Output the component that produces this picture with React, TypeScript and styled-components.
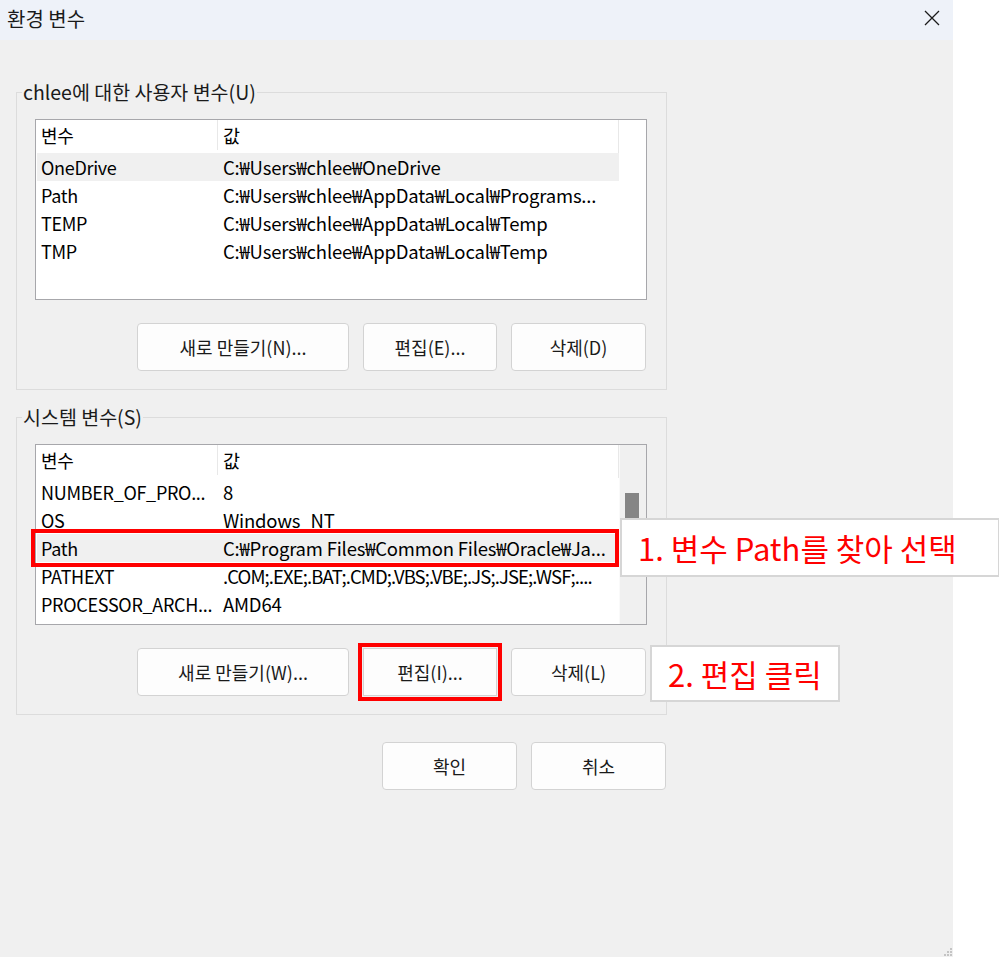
import React from "react";
import styled, { createGlobalStyle } from "styled-components";

const GlobalStyle = createGlobalStyle`
  html, body {
    margin: 0;
    padding: 0;
    background: #ffffff;
  }
  body {
    font-family: "Noto Sans CJK KR", "Liberation Sans", sans-serif;
    color: #000000;
  }
`;

type Row = {
  name: string;
  value: string;
  selected?: boolean;
  marked?: boolean;
  tight?: boolean;
};

const userVars: Row[] = [
  { name: "OneDrive", value: "C:₩Users₩chlee₩OneDrive", selected: true },
  { name: "Path", value: "C:₩Users₩chlee₩AppData₩Local₩Programs..." },
  { name: "TEMP", value: "C:₩Users₩chlee₩AppData₩Local₩Temp" },
  { name: "TMP", value: "C:₩Users₩chlee₩AppData₩Local₩Temp" },
];

const systemVars: Row[] = [
  { name: "NUMBER_OF_PRO...", value: "8" },
  { name: "OS", value: "Windows_NT" },
  {
    name: "Path",
    value: "C:₩Program Files₩Common Files₩Oracle₩Ja...",
    selected: true,
    marked: true,
  },
  {
    name: "PATHEXT",
    value: ".COM;.EXE;.BAT;.CMD;.VBS;.VBE;.JS;.JSE;.WSF;....",
    tight: true,
  },
  { name: "PROCESSOR_ARCH...", value: "AMD64" },
];

const App: React.FC = () => {
  return (
    <>
      <GlobalStyle />
      <Dialog>
        <TitleBar>
          <Title>환경 변수</Title>
          <CloseIcon width="16" height="16" viewBox="0 0 16 16">
            <path d="M1 1 L15 15 M15 1 L1 15" stroke="#1b1b1b" strokeWidth="1.3" fill="none" />
          </CloseIcon>
        </TitleBar>

        <Body>
          <Group>
            <Legend>chlee에 대한 사용자 변수(U)</Legend>
            <VarList rows={userVars} />
            <ButtonRow>
              <Button $w={212}>새로 만들기(N)...</Button>
              <Button $w={134}>편집(E)...</Button>
              <Button $w={135}>삭제(D)</Button>
            </ButtonRow>
          </Group>

          <Group>
            <Legend>시스템 변수(S)</Legend>
            <VarList rows={systemVars} scroll />
            <ButtonRow>
              <Button $w={212}>새로 만들기(W)...</Button>
              <Button $w={134} $marked>
                편집(I)...
              </Button>
              <Button $w={135}>삭제(L)</Button>
              <Callout $step={2}>2. 편집 클릭</Callout>
            </ButtonRow>
          </Group>

          <FooterRow>
            <Button $w={135}>확인</Button>
            <Button $w={135}>취소</Button>
          </FooterRow>
        </Body>

        <Grip width="10" height="10" viewBox="0 0 10 10">
          <rect x="7" y="1" width="2" height="2" fill="#c4c4c4" />
          <rect x="4" y="4" width="2" height="2" fill="#c4c4c4" />
          <rect x="7" y="4" width="2" height="2" fill="#c4c4c4" />
          <rect x="1" y="7" width="2" height="2" fill="#c4c4c4" />
          <rect x="4" y="7" width="2" height="2" fill="#c4c4c4" />
          <rect x="7" y="7" width="2" height="2" fill="#c4c4c4" />
        </Grip>
      </Dialog>
    </>
  );
};

const VarList: React.FC<{ rows: Row[]; scroll?: boolean }> = ({ rows, scroll }) => (
  <ListBox>
    <ListBody>
      <HeaderRow>
        <NameCell $header>변수</NameCell>
        <ValueCell>값</ValueCell>
      </HeaderRow>
      {rows.map((r) => (
        <ItemRow key={r.name} $selected={r.selected}>
          <NameCell>{r.name}</NameCell>
          <ValueCell $tight={r.tight}>{r.value}</ValueCell>
          {r.marked && (
            <>
              <RowMark />
              <Callout $step={1}>1. 변수 Path를 찾아 선택</Callout>
            </>
          )}
        </ItemRow>
      ))}
    </ListBody>
    <Gutter $scroll={scroll}>{scroll && <Thumb />}</Gutter>
  </ListBox>
);

export default App;

const Dialog = styled.div`
  position: relative;
  width: 953px;
  height: 957px;
  background: #f0f0f0;
  display: flex;
  flex-direction: column;
`;

const TitleBar = styled.div`
  height: 40px;
  background: #eef2f9;
  display: flex;
  align-items: center;
  justify-content: space-between;
  padding: 0 13px 4px 7px;
  box-sizing: border-box;
`;

const Title = styled.div`
  font-size: 20px;
  color: #1a1a1a;
`;

const CloseIcon = styled.svg`
  display: block;
`;

const Body = styled.div`
  display: flex;
  flex-direction: column;
  gap: 15px;
  padding: 40px 0 0 16px;
  width: 667px;
  box-sizing: border-box;
`;

const Group = styled.fieldset`
  margin: 0;
  padding: 0 19px 18px 18px;
  border: 1px solid #dcdcdc;
  min-width: 0;
  display: flex;
  flex-direction: column;
`;

const Legend = styled.legend`
  margin-left: -13px;
  padding: 0 1px;
  font-size: 19.5px;
  line-height: 24px;
  color: #1a1a1a;
`;

const ListBox = styled.div`
  margin-top: 15px;
  height: 181px;
  border: 1px solid #a7a7ab;
  background: #ffffff;
  display: flex;
  box-sizing: border-box;
`;

const ListBody = styled.div`
  flex: 1;
  min-width: 0;
  display: flex;
  flex-direction: column;
`;

const HeaderRow = styled.div`
  display: flex;
  height: 33px;
  align-items: center;
  padding-bottom: 3px;
  box-sizing: border-box;
  border-right: 1px solid #e8e8e8;
`;

const ItemRow = styled.div<{ $selected?: boolean }>`
  position: relative;
  display: flex;
  height: 28px;
  align-items: center;
  margin-left: 1px;
  background: ${(p) => (p.$selected ? "#f0f0f0" : "transparent")};
`;

const NameCell = styled.div<{ $header?: boolean }>`
  flex: none;
  width: ${(p) => (p.$header ? "182px" : "181px")};
  box-sizing: border-box;
  padding-left: ${(p) => (p.$header ? "5px" : "4px")};
  font-size: 18px;
  letter-spacing: -0.3px;
  white-space: nowrap;
  overflow: hidden;
  align-self: stretch;
  display: flex;
  align-items: center;
  border-right: ${(p) => (p.$header ? "1px solid #e8e8e8" : "none")};
`;

const ValueCell = styled.div<{ $tight?: boolean }>`
  flex: 1;
  min-width: 0;
  overflow: hidden;
  padding-left: 5px;
  font-size: 18.5px;
  letter-spacing: ${(p) => (p.$tight ? "-0.9px" : "-0.2px")};
  white-space: nowrap;
`;

const Gutter = styled.div<{ $scroll?: boolean }>`
  flex: none;
  position: relative;
  width: 27px;
  background: ${(p) => (p.$scroll ? "#f0f0f0" : "#ffffff")};
  border-left: ${(p) => (p.$scroll ? "1px solid #fafafa" : "none")};
  box-sizing: border-box;
`;

const Thumb = styled.div`
  position: absolute;
  left: 5px;
  top: 48px;
  width: 14px;
  height: 30px;
  background: #858585;
`;

const RowMark = styled.div`
  position: absolute;
  left: -6px;
  right: 0;
  top: -5px;
  bottom: -5px;
  border: 4px solid #ff0000;
  pointer-events: none;
`;

const Callout = styled.div<{ $step: 1 | 2 }>`
  position: absolute;
  z-index: 10;
  left: ${(p) => (p.$step === 1 ? "calc(100% + 1px)" : "calc(100% + 3px)")};
  top: ${(p) => (p.$step === 1 ? "-16px" : "-3px")};
  width: ${(p) => (p.$step === 1 ? "380px" : "190px")};
  height: ${(p) => (p.$step === 1 ? "59px" : "57px")};
  box-sizing: border-box;
  border: 2px solid #d6d6d6;
  background: #ffffff;
  display: flex;
  align-items: center;
  padding-left: 16px;
  font-size: 31px;
  color: #ff0000;
  white-space: nowrap;
`;

const ButtonRow = styled.div`
  position: relative;
  margin-top: 23px;
  display: flex;
  justify-content: flex-end;
  gap: 14px;
  padding-right: 1px;
`;

const FooterRow = styled.div`
  margin-top: 12px;
  display: flex;
  justify-content: flex-end;
  gap: 14px;
  padding-right: 1px;
`;

const Button = styled.div<{ $w: number; $marked?: boolean }>`
  width: ${(p) => p.$w}px;
  height: 48px;
  box-sizing: border-box;
  background: #fdfdfd;
  border: 1px solid #d3d3d3;
  border-radius: 4px;
  display: flex;
  align-items: center;
  justify-content: center;
  font-size: 18px;
  color: #1a1a1a;
  white-space: nowrap;
  ${(p) => (p.$marked ? "outline: 4px solid #ff0000; outline-offset: 1px; border-radius: 0;" : "")}
`;

const Grip = styled.svg`
  position: absolute;
  right: 0;
  bottom: 0;
`;
